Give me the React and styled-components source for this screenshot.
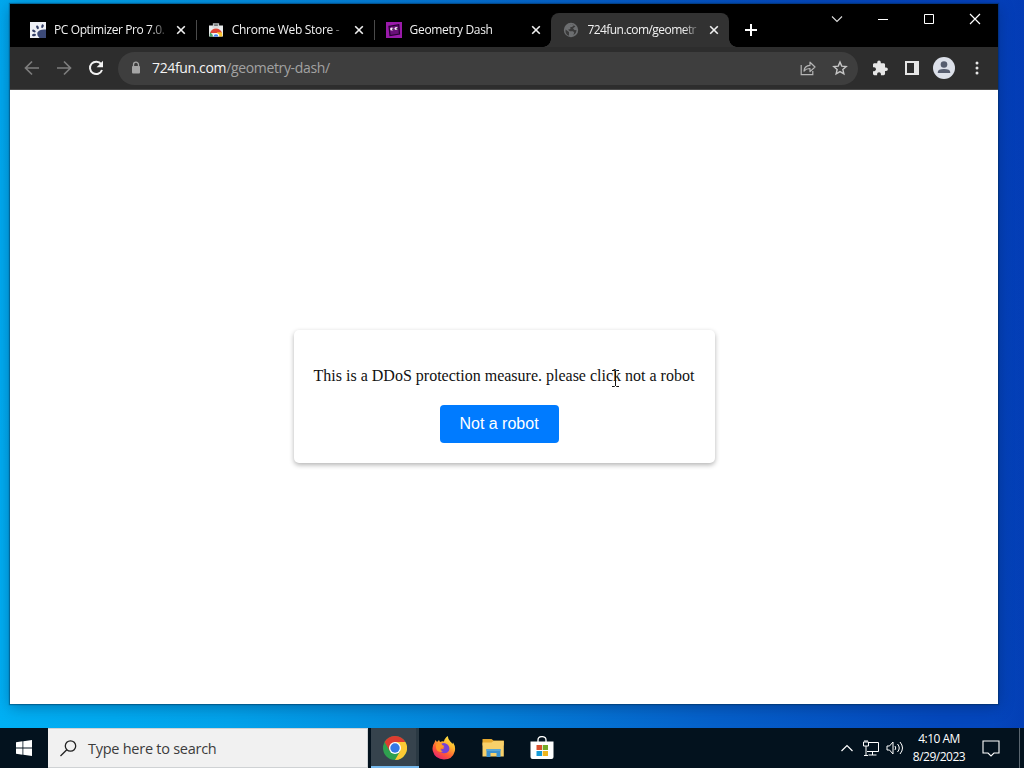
import React from 'react';
import styled, { createGlobalStyle, css } from 'styled-components';

const Global = createGlobalStyle`
  *, *::before, *::after { box-sizing: border-box; }
  html, body { margin: 0; padding: 0; overflow: hidden; }
  svg { display: block; flex: none; }
`;

const ui = `'Open Sans', 'Noto Sans', sans-serif`;

const Screen = styled.div`
  width: 1024px;
  height: 768px;
  display: flex;
  flex-direction: column;
  font-family: ${ui};
  overflow: hidden;
`;

const Desktop = styled.div`
  height: 728px;
  padding: 4px 26px 24px 10px;
  background:
    linear-gradient(90deg, transparent 97%, rgba(0, 40, 150, 0.2) 100%),
    linear-gradient(80deg, #00b0f4 0%, #02a2ea 20%, #0482da 42%, #0560ca 62%, #0448bd 82%, #0440bc 100%);
`;

const BrowserWindow = styled.main`
  height: 700px;
  display: flex;
  flex-direction: column;
  background: #fff;
  box-shadow: 0 0 1px 1px rgba(0, 40, 70, 0.4), 0 3px 14px rgba(0, 20, 60, 0.35);
`;

const TabStrip = styled.header`
  height: 43px;
  padding: 9px 0 0 8px;
  display: flex;
  background: #000;
`;

const Tab = styled.div`
  position: relative;
  width: 177.8px;
  height: 34px;
  padding: 0 8px 0 12px;
  display: flex;
  align-items: center;
  color: #f1f1f1;
  border-radius: 8px 8px 0 0;
  ${(p) => p.$divider && css`
    &::after {
      content: '';
      position: absolute;
      right: -1px;
      top: 7px;
      width: 1px;
      height: 20px;
      background: #4a4a4a;
    }
  `}
  ${(p) => p.$active && css`
    background: #323232;
    &::before, &::after {
      content: '';
      position: absolute;
      bottom: 0;
      width: 8px;
      height: 8px;
    }
    &::before { left: -8px; background: radial-gradient(circle at 0 0, #000 7.5px, #323232 8px); }
    &::after { right: -8px; background: radial-gradient(circle at 100% 0, #000 7.5px, #323232 8px); }
  `}
`;

const TabTitle = styled.span`
  width: 113px;
  margin: 0 8px 0 8px;
  white-space: nowrap;
  font-size: 12px;
  line-height: 18px;
  letter-spacing: ${(p) => p.$track || 0}px;
  -webkit-mask-image: linear-gradient(90deg, #000 86%, rgba(0, 0, 0, 0.15) 100%);
`;

const NewTab = styled.div`
  height: 34px;
  padding-left: 15px;
  display: flex;
  align-items: center;
`;

const WindowControls = styled.div`
  height: 12px;
  margin-left: auto;
  display: flex;
  align-items: center;
  & > svg { width: 46px; height: 12px; }
`;

const Toolbar = styled.div`
  height: 43px;
  padding: 0 11px 0 14px;
  display: flex;
  align-items: center;
  background: #2d2d2d;
  border-bottom: 1px solid #4b4b4b;
`;

const NavButtons = styled.div`
  display: flex;
  gap: 16px;
`;

const AddressBar = styled.div`
  width: 740px;
  flex: none;
  height: 33px;
  margin-left: 14px;
  padding: 0 10px;
  display: flex;
  align-items: center;
  border-radius: 17px;
  background: #3e3e3e;
`;

const Url = styled.span`
  margin: 0 auto 0 8px;
  font-size: 14px;
  line-height: 20px;
  letter-spacing: -0.35px;
  color: #a2a2a2;
`;

const Host = styled.span`
  color: #f4f4f4;
`;

const AddressActions = styled.div`
  display: flex;
  gap: 16px;
`;

const ToolbarActions = styled.div`
  margin-left: 12px;
  display: flex;
  align-items: center;
  gap: 11.5px;
`;

const Page = styled.section`
  position: relative;
  flex: 1;
  display: flex;
  justify-content: center;
  align-items: flex-start;
  padding-top: 240px;
`;

const Card = styled.div`
  width: 421px;
  height: 133px;
  padding: 37px 20px 20px;
  display: flex;
  flex-direction: column;
  align-items: center;
  border-radius: 5px;
  background: #fff;
  box-shadow: 0 2px 5px rgba(0, 0, 0, 0.3);
`;

const Message = styled.p`
  margin: 0 0 20px;
  font: 16px/18px 'Liberation Serif', serif;
  color: #111;
  white-space: nowrap;
`;

const RobotButton = styled.button`
  width: 119px;
  height: 38px;
  margin-right: 10px;
  padding: 0;
  border: 0;
  border-radius: 4px;
  background: #007bff;
  color: #fff;
  font: 16px/18px 'Liberation Sans', sans-serif;
`;

const TextCursor = styled.svg`
  position: absolute;
  left: 601px;
  top: 280px;
`;

const Taskbar = styled.footer`
  height: 40px;
  display: flex;
  background: #03121e;
`;

const StartButton = styled.div`
  width: 48px;
  display: flex;
  align-items: center;
  justify-content: center;
`;

const SearchBox = styled.div`
  width: 320px;
  margin-right: 3px;
  padding-left: 12px;
  display: flex;
  align-items: center;
  gap: 11px;
  background: #f1f1f1;
  border: 1px solid #cfd2d4;
  border-left: 0;
  font-size: 14.5px;
  letter-spacing: -0.26px;
  color: #3c3c3c;
`;

const TaskButton = styled.div`
  width: ${(p) => (p.$active ? 48 : 49)}px;
  display: flex;
  align-items: center;
  justify-content: center;
  ${(p) => p.$active && css`
    background: #36434d;
    border-bottom: 2px solid #76b9ed;
    padding-top: 2px;
    box-shadow: inset -3px 0 #2a3943;
  `}
`;

const Tray = styled.div`
  margin-left: auto;
  display: flex;
  align-items: center;
  color: #fff;
`;

const Clock = styled.div`
  width: 62px;
  margin: 0 12px 0 2px;
  text-align: center;
  font-size: 12px;
  line-height: 18px;
  letter-spacing: -0.5px;
  white-space: nowrap;
`;

const ShowDesktop = styled.div`
  width: 5px;
  height: 40px;
  margin-left: 19px;
  border-left: 1px solid #5a6670;
`;

const PawIcon = () => (
  <svg width="16" height="16" viewBox="0 0 16 16">
    <path fill="#eef0f5" d="M0 0h16v16H0z" />
    <path fill="#3c4a78" d="M7.500 10.500Q9 7 16 7.500V16H9.500Q6.500 13 7.500 10.500z" />
    <g fill="#343f66">
      <ellipse cx="4" cy="13" rx="2" ry="1.200" transform="rotate(-10 4 13)" />
      <ellipse cx="3.900" cy="9" rx="1.900" ry="1.200" transform="rotate(25 3.900 9)" />
      <ellipse cx="7.500" cy="5.300" rx="1.200" ry="1.900" transform="rotate(-25 7.500 5.300)" />
      <ellipse cx="12.500" cy="4.200" rx="1.200" ry="1.900" transform="rotate(20 12.500 4.200)" />
    </g>
  </svg>
);

const WebStoreIcon = () => (
  <svg width="16" height="16" viewBox="0 0 16 16">
    <path d="M5.500 4V2h5v2" fill="none" stroke="#b9bdbf" strokeWidth="1.300" />
    <path fill="#e9ebec" d="M1 3.500h14V14.500H1z" />
    <path fill="#c8cbcd" d="M4.500 4.500h7v1h-7z" />
    <path fill="#df4435" d="M2 11Q3.500 6.500 8 6.500T14 11H8z" />
    <path fill="#4aa366" d="M1.700 14.500q-.2-2.500.6-4.300L6 14.500z" />
    <path fill="#fbc32d" d="M14.300 14.500q.2-2.500-.6-4.300H9l1 4.300z" />
    <path fill="#fff" d="M4.700 14.500a3.300 3.300 0 0 1 6.600 0z" />
    <path fill="#4285f4" d="M5.700 14.500a2.300 2.300 0 0 1 4.600 0z" />
  </svg>
);

const GeometryIcon = () => (
  <svg width="16" height="16" viewBox="0 0 16 16">
    <path fill="#9a1aaa" d="M0 0h16v16H0z" />
    <path fill="#6a1078" stroke="#250330" strokeWidth="1.200" d="m3 4.300 9.800-1.600.7 9.400-9.500 1.500z" />
    <ellipse cx="5.800" cy="7" rx="1.700" ry="1.600" fill="#fbe6fa" />
    <ellipse cx="10.200" cy="6.500" rx="1.700" ry="1.600" fill="#fbe6fa" />
    <path fill="#201026" d="M6.300 6.500h1.200V8H6.300zM10.600 6h1.200v1.500h-1.200z" />
  </svg>
);

const GlobeIcon = () => (
  <svg width="16" height="16" viewBox="0 0 16 16">
    <circle cx="8" cy="8" r="7.200" fill="#6c6e70" />
    <path fill="#3a3a3a" d="M2.500 7.500 6 10v3.800q-4-1.400-3.500-6.300zM6.800 2q3 0 4.200 1.200L9 5H7.400v2L5 7.800 7 9.200h3l1.200 1.300-.8 2.800q3-1.800 3.200-5L11.400 8 10 6.300l2.400-1.800Q9.800 1.600 6.800 2z" />
  </svg>
);

const TabClose = () => (
  <svg width="14" height="14" viewBox="0 0 14 14">
    <path d="m3.200 3.200 7.600 7.600M10.800 3.200l-7.600 7.600" stroke="#f0f0f0" strokeWidth="1.600" />
  </svg>
);

const Backward = () => (
  <svg width="16" height="16" viewBox="0 0 16 16" fill="none" stroke="#7d7d7d" strokeWidth="1.700">
    <path d="M15 8H2M8 1.500 1.500 8 8 14.500" />
  </svg>
);

const Forward = () => (
  <svg width="16" height="16" viewBox="0 0 16 16" fill="none" stroke="#7d7d7d" strokeWidth="1.700">
    <path d="M1 8h13M8 1.500 14.500 8 8 14.500" />
  </svg>
);

const Reload = () => (
  <svg width="16" height="16" viewBox="0 0 16 16">
    <path d="M13.200 4.200A6.200 6.200 0 1 0 14 10" fill="none" stroke="#f2f2f2" strokeWidth="2" />
    <path d="M15 .8v6.400H8.600z" fill="#f2f2f2" />
  </svg>
);

const Lock = () => (
  <svg width="16" height="16" viewBox="0 0 16 16">
    <path d="M5.500 7V4.700a2.500 2.500 0 0 1 5 0V7" fill="none" stroke="#a5a5a5" strokeWidth="1.300" />
    <rect x="4" y="6" width="8" height="7.500" rx="1" fill="#a5a5a5" />
  </svg>
);

const Share = () => (
  <svg width="16" height="16" viewBox="0 0 16 16" fill="none" stroke="#b5b5b5" strokeWidth="1.200">
    <path d="M1.200 5v9.600h11.600V11" />
    <path d="M4 11q.4-5.500 6-5.700V2.200L15 7l-5 4.600V8.500Q6.500 8.300 4 11z" strokeLinejoin="round" />
  </svg>
);

const Star = () => (
  <svg width="16" height="16" viewBox="0 0 16 16" fill="none" stroke="#c6c6c6" strokeWidth="1.400">
    <path d="m8 2.100 1.750 4.050 4.450.4-3.350 2.950 1 4.350L8 11.550l-3.850 2.300 1-4.350L1.800 6.550l4.450-.4z" />
  </svg>
);

const Puzzle = () => (
  <svg width="20" height="20" viewBox="0 0 24 24" fill="#e6e6e6">
    <path d="M20.500 11H19V7c0-1.100-.9-2-2-2h-4V3.500a2.500 2.500 0 0 0-5 0V5H4c-1.100 0-1.990.9-1.990 2v3.800H3.500c1.490 0 2.700 1.210 2.700 2.700s-1.210 2.700-2.700 2.700H2V20c0 1.100.9 2 2 2h3.800v-1.500c0-1.490 1.210-2.700 2.700-2.700s2.700 1.210 2.700 2.700V22H17c1.100 0 2-.9 2-2v-4h1.500a2.500 2.500 0 0 0 0-5z" transform="translate(1.900 2) scale(.85)" />
  </svg>
);

const SidePanel = () => (
  <svg width="20" height="20" viewBox="0 0 20 20">
    <path fill="#e6e6e6" fillRule="evenodd" d="M3 3h14v14H3zM5 5v10h7V5z" />
  </svg>
);

const Avatar = () => (
  <svg width="22" height="22" viewBox="0 0 22 22">
    <circle cx="11" cy="11" r="11" fill="#dce0e9" />
    <circle cx="11" cy="7.500" r="3.300" fill="#565d6f" />
    <path d="M4.800 16v-1q0-3 6.200-3t6.200 3v1z" fill="#565d6f" />
  </svg>
);

const Dots = () => (
  <svg width="20" height="20" viewBox="0 0 20 20" fill="#e6e6e6">
    <circle cx="10" cy="5" r="1.500" />
    <circle cx="10" cy="10" r="1.500" />
    <circle cx="10" cy="15" r="1.500" />
  </svg>
);

const ChromeIcon = () => (
  <svg width="24" height="24" viewBox="0 0 24 24">
    <circle cx="12" cy="12" r="12" fill="#2fa04f" />
    <path fill="#dd3c30" d="M1.600 6A12 12 0 0 1 22.400 6H12l-5.200 9z" />
    <path fill="#fcc934" d="M22.400 6A12 12 0 0 1 12 24l5.200-9L12 6z" />
    <circle cx="12" cy="12" r="6" fill="#fff" />
    <circle cx="12" cy="12" r="4.700" fill="#3478e5" />
  </svg>
);

const FirefoxIcon = () => (
  <svg width="24" height="24" viewBox="0 0 24 24">
    <defs>
      <linearGradient id="fox" x1=".85" y1="0" x2=".25" y2="1">
        <stop offset="0" stopColor="#fff04a" />
        <stop offset=".35" stopColor="#ffb62e" />
        <stop offset=".68" stopColor="#ff5a35" />
        <stop offset="1" stopColor="#e52072" />
      </linearGradient>
    </defs>
    <path fill="url(#fox)" d="M2.500 6.500 3.500 4l1.500 2 2-2 1 2q2-1 4-.5.500-3.500 4-5.500-.5 3 2.500 5.700 1.300.9 1.800 2.200l.8-1.400Q24 11 22.700 15.500 20.500 23.500 12 23.500 3 23.200.8 15-.3 10 2.500 6.500z" />
    <path fill="#7542d8" d="M8 8.500Q12 5.500 15.500 8.500q3 3 1.300 6.500-2.200 3.300-6.300 2-2.500-1.200-2.700-3.500 3.200.5 4.700-1.700L9 10.500z" />
    <path fill="#ff9728" d="M4 8.500q3-2.500 5.500-.8 0 1.500 2.900 2.300-1 2-3.700 2.200-.7 2.300 2.300 3-3.500 1.700-6-.8Q3.500 12 4 8.500z" />
  </svg>
);

const FolderIcon = () => (
  <svg width="24" height="24" viewBox="0 0 24 24">
    <path fill="#e7a92f" d="M1.500 3h9l2 1.500h10.300v5H1.500z" />
    <path fill="#f8d06a" d="M1.500 6.500h9l2-1.500h10.300v15.500H1.500z" />
    <path fill="#3b91cf" d="M5.500 13h14v8h-4v-4h-6v4h-4z" />
    <path fill="#5aa6d4" d="M5.500 13h14v2h-14z" />
  </svg>
);

const StoreIcon = () => (
  <svg width="24" height="24" viewBox="0 0 24 24">
    <path d="M8 6V4q0-3.400 4-3.400T16 4v2" fill="none" stroke="#fff" strokeWidth="1.300" />
    <path fill="#fff" d="M.5 5.500h23V21q0 2-2 2h-19q-2 0-2-2z" />
    <path fill="#d9502f" d="M6.500 9H12v5H6.500z" />
    <path fill="#75a928" d="M12.700 9h5.300v5h-5.300z" />
    <path fill="#159bd7" d="M6.500 15H12v5H6.500z" />
    <path fill="#efb51d" d="M12.700 15h5.300v5h-5.300z" />
  </svg>
);

export default function App() {
  return (
    <Screen>
      <Global />
      <Desktop>
        <BrowserWindow>
          <TabStrip>
            <Tab $divider><PawIcon /><TabTitle $track={-0.4}>PC Optimizer Pro 7.0.</TabTitle><TabClose /></Tab>
            <Tab $divider><WebStoreIcon /><TabTitle $track={-0.3}>Chrome Web Store -</TabTitle><TabClose /></Tab>
            <Tab><GeometryIcon /><TabTitle $track={-0.33}>Geometry Dash</TabTitle><TabClose /></Tab>
            <Tab $active><GlobeIcon /><TabTitle $track={-0.55}>724fun.com/geometr</TabTitle><TabClose /></Tab>
            <NewTab>
              <svg width="14" height="14"><path d="M7 1v12M1 7h12" stroke="#fff" strokeWidth="2" /></svg>
            </NewTab>
            <WindowControls>
              <svg viewBox="0 0 46 12"><path d="m18 3.500 5 5 5-5" fill="none" stroke="#ddd" strokeWidth="1.100" /></svg>
              <svg viewBox="0 0 46 12"><path d="M18 6.500h10" stroke="#fff" /></svg>
              <svg viewBox="0 0 46 12"><path d="M18.500 1.500h9v9h-9z" fill="none" stroke="#fff" /></svg>
              <svg viewBox="0 0 46 12"><path d="m18 1 10 10M28 1 18 11" stroke="#fff" strokeWidth="1.200" /></svg>
            </WindowControls>
          </TabStrip>
          <Toolbar>
            <NavButtons><Backward /><Forward /><Reload /></NavButtons>
            <AddressBar>
              <Lock />
              <Url><Host>724fun.com</Host>/geometry-dash/</Url>
              <AddressActions><Share /><Star /></AddressActions>
            </AddressBar>
            <ToolbarActions><Puzzle /><SidePanel /><Avatar /><Dots /></ToolbarActions>
          </Toolbar>
          <Page>
            <Card>
              <Message>This is a DDoS protection measure. please click not a robot</Message>
              <RobotButton>Not a robot</RobotButton>
            </Card>
            <TextCursor width="9" height="17" viewBox="0 0 9 17" fill="none" stroke="#111">
              <path d="M1 .5h2.500l1 1 1-1H8M4.500 1v15M1 16.500h2.500l1-1 1 1H8" />
            </TextCursor>
          </Page>
        </BrowserWindow>
      </Desktop>
      <Taskbar>
        <StartButton>
          <svg width="16" height="16" viewBox="0 0 16 16" fill="#fff">
            <path d="m0 2.200 6.500-.9v6.200H0zM7.300 1.200 16 0v7.500H7.300zM0 8.400h6.500v6.300L0 13.800zM7.300 8.400H16V16l-8.700-1.200z" />
          </svg>
        </StartButton>
        <SearchBox>
          <svg width="17" height="17" viewBox="0 0 17 17" fill="none" stroke="#222" strokeWidth="1.300">
            <circle cx="10.500" cy="6" r="5.200" /><path d="M6.800 9.700.5 16" />
          </svg>
          Type here to search
        </SearchBox>
        <TaskButton $active><ChromeIcon /></TaskButton>
        <TaskButton><FirefoxIcon /></TaskButton>
        <TaskButton><FolderIcon /></TaskButton>
        <TaskButton><StoreIcon /></TaskButton>
        <Tray>
          <svg width="68" height="20" viewBox="0 0 68 20" fill="none" stroke="#fff" strokeWidth="1.200">
            <path d="m3.500 13 5.500-5.500 5.500 5.500" />
            <path d="M31 4.500h9.500v9H29M34.500 14v3M30.500 17h8M25.500 4h5v4h-5zM28 8v9.500M26 17.500h4M27 2v2M29 2v2" strokeWidth="1" />
            <path d="M49 8h2.500l3.500-4v12l-3.500-4H49zM57 8q1.500 2 0 4M59.500 6q3.500 4 0 8M62 4q5 6 0 12" strokeWidth="1" />
          </svg>
          <Clock>4:10 AM<br />8/29/2023</Clock>
          <svg width="18" height="18" viewBox="0 0 18 18" fill="none" stroke="#fff" strokeWidth="1.100">
            <path d="M1 2h16v12h-5l-3 3-3-3H1z" />
          </svg>
          <ShowDesktop />
        </Tray>
      </Taskbar>
    </Screen>
  );
}
